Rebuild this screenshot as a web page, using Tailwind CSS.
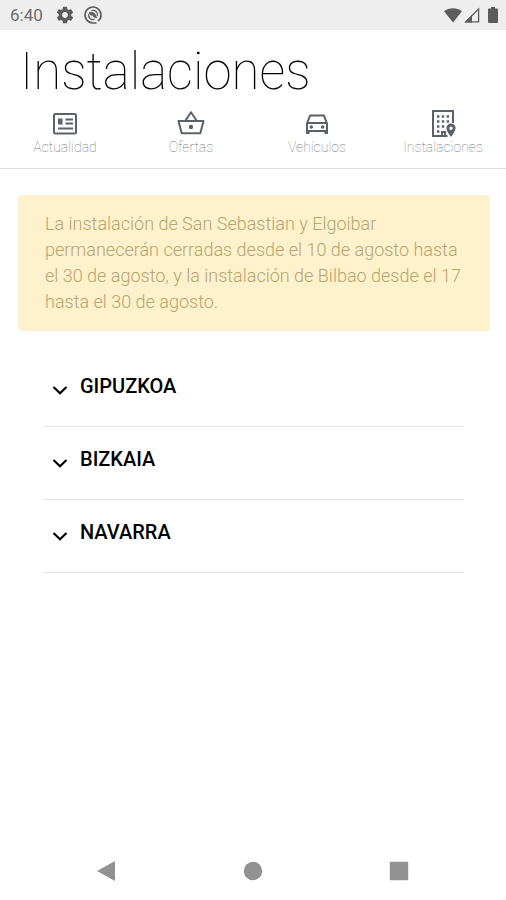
<!DOCTYPE html>
<html lang="es">
<head>
    <meta charset="UTF-8">
    <meta name="viewport" content="width=device-width, initial-scale=1.0">
    <title>Instalaciones</title>
    <script src="https://cdn.jsdelivr.net/npm/@tailwindcss/browser@4"></script>
</head>
<body class="flex min-h-screen flex-col bg-white font-[Roboto,sans-serif] text-black">
    <!-- Status bar -->
    <div class="flex h-[30px] items-center bg-[#eeeeee] px-2 text-[#5c5c5c]">
        <span class="pl-[2px] text-[17px] leading-5 text-[#6c6c6c]">6:40</span>
        <svg class="ml-3 size-5" viewBox="0 0 24 24" fill="currentColor" aria-hidden="true">
            <path d="M19.43 12.98c.04-.32.07-.64.07-.98s-.03-.66-.07-.98l2.11-1.65c.19-.15.24-.42.12-.64l-2-3.46c-.12-.22-.39-.3-.61-.22l-2.49 1c-.52-.4-1.08-.73-1.69-.98l-.38-2.65C14.46 2.18 14.25 2 14 2h-4c-.25 0-.46.18-.49.42l-.38 2.65c-.61.25-1.17.59-1.69.98l-2.49-1c-.23-.09-.49 0-.61.22l-2 3.46c-.13.22-.07.49.12.64l2.11 1.65c-.04.32-.07.65-.07.98s.03.66.07.98l-2.11 1.65c-.19.15-.24.42-.12.64l2 3.46c.12.22.39.3.61.22l2.49-1c.52.4 1.08.73 1.69.98l.38 2.65c.03.24.24.42.49.42h4c.25 0 .46-.18.49-.42l.38-2.65c.61-.25 1.17-.59 1.69-.98l2.49 1c.23.09.49 0 .61-.22l2-3.46c.12-.22.07-.49-.12-.64l-2.11-1.65zM12 15.5c-1.93 0-3.5-1.57-3.5-3.5s1.57-3.5 3.5-3.5 3.5 1.57 3.5 3.5-1.57 3.5-3.5 3.5z"/>
        </svg>
        <svg class="ml-2 size-5" viewBox="0 0 20 20" fill="none" stroke="currentColor" aria-hidden="true">
            <path d="M15.2 16.1A8 8 0 1 0 10 18h3.500" stroke-width="1.6"/>
            <path d="M5.700 9a4.500 4.500 0 0 0 6 5.200M8.500 5.700a4.500 4.500 0 0 1 5.900 5.300" stroke-width="1.3"/>
            <path d="M5.800 7.400c3.200-1.900 6.700.3 8.400 5.600-2.600.2-4-.7-4.700-2.500-1.900.1-3.200-1-3.700-3.100z" fill="currentColor" stroke="none"/>
        </svg>
        <div class="ml-auto flex items-center gap-[2px]">
            <svg class="h-4 w-[18px]" viewBox="0 0 18 16" fill="currentColor" aria-hidden="true">
                <path d="M0 4.3C5 .1 13 .1 18 4.300L9 15.5z"/>
            </svg>
            <svg class="size-4" viewBox="0 0 16 16" fill="none" stroke="currentColor" aria-hidden="true">
                <path d="M1.800 14.800L14.600 2v12.800z" stroke-width="1.3"/>
                <path d="M.5 15.500L8 8v7.500z" fill="currentColor" stroke="none"/>
            </svg>
            <svg class="ml-[6px] h-4 w-[10px]" viewBox="0 0 10 16" fill="currentColor" aria-hidden="true">
                <path d="M3 0h4v1.600h2q1 0 1 1V15q0 1-1 1H1q-1 0-1-1V2.600q0-1 1-1h2z"/>
            </svg>
        </div>
    </div>

    <header class="border-b border-[#dcdcdc]">
        <h1 class="px-5 pt-3 text-[51px] leading-[60px] font-thin">Instalaciones</h1>
        <!-- Section tabs -->
        <nav class="grid grid-cols-4 pt-2 pb-3 pl-[2px] text-[14px] leading-[18px] font-thin text-[#777777]">
            <a href="#actualidad" class="flex flex-col items-center">
                <svg class="size-7" viewBox="0 0 28 28" fill="none" stroke="#5b6168" stroke-width="2" aria-hidden="true">
                    <rect x="3" y="4" width="22" height="19.5" rx="1.5"/>
                    <path d="M14.5 9.500H22M14.5 13.500H22M7 18.500h15"/>
                    <path d="M7 8.500h4.500v6H7z" fill="#5b6168" stroke="none"/>
                </svg>
                Actualidad
            </a>
            <a href="#ofertas" class="flex flex-col items-center">
                <svg class="size-7" viewBox="0 0 28 28" fill="none" stroke="#5b6168" stroke-width="2" stroke-linejoin="round" aria-hidden="true">
                    <path d="M1.500 11h25l-3.200 12.200H4.700zM8.500 10.500L14 2.200l5.500 8.300"/>
                    <circle cx="14" cy="17" r="2.2" fill="#5b6168" stroke="none"/>
                </svg>
                Ofertas
            </a>
            <a href="#vehiculos" class="flex flex-col items-center">
                <svg class="size-7" viewBox="0 0 28 28" fill="none" stroke="#5b6168" stroke-width="2" stroke-linejoin="round" aria-hidden="true">
                    <path d="M4 13.500L7 5.600h14l3 7.900v7.500H4zM4 13h20"/>
                    <path d="M3 20h3.500v4H3zM21.500 20H25v4h-3.500z" fill="#5b6168" stroke="none"/>
                    <circle cx="8.300" cy="17" r="1.8" fill="#5b6168" stroke="none"/>
                    <circle cx="19.700" cy="17" r="1.8" fill="#5b6168" stroke="none"/>
                </svg>
                Vehículos
            </a>
            <a href="#instalaciones" class="flex flex-col items-center">
                <svg class="size-7" viewBox="0 0 28 28" fill="none" stroke="#5b6168" stroke-width="2" aria-hidden="true">
                    <path d="M24 13V1H4v25h14.500M13 26v-4h3v4"/>
                    <path d="M8 6.500h12M8 11.500h12M8 16.500h8M8 21.500h3" stroke-width="2.4" stroke-dasharray="2.4 2.4"/>
                    <path d="M22 13.500a4.600 4.600 0 0 0-4.600 4.600c0 3.400 4.600 8.900 4.600 8.900s4.600-5.500 4.600-8.900a4.600 4.600 0 0 0-4.600-4.600zm0 3a1.700 1.700 0 1 1 0 3.400 1.700 1.700 0 0 1 0-3.400z" fill="#5b6168" stroke="none"/>
                </svg>
                Instalaciones
            </a>
        </nav>
    </header>

    <main class="grow">
        <p class="mx-4 mt-[26px] ml-[18px] rounded bg-[#fff1cb] py-4 pr-6 pl-[27px] text-[18px] leading-[26px] font-light text-[#b5a573]">
            La instalación de San Sebastian y Elgoibar permanecerán cerradas desde el 10 de agosto hasta el 30 de agosto, y la instalación de Bilbao desde el 17 hasta el 30 de agosto.
        </p>

        <!-- Provinces -->
        <div class="mr-[42px] ml-11 mt-[23px] text-[20px] leading-6 font-medium">
            <button type="button" aria-expanded="false" class="flex h-[73px] w-full items-center gap-3 border-b border-[#e4e4e4] pl-2 pb-2">
                <svg class="mt-2 h-4 w-4" viewBox="0 0 16 16" fill="none" stroke="currentColor" stroke-width="2.2" aria-hidden="true"><path d="M1.500 5L8 11.200 14.500 5"/></svg>
                GIPUZKOA
            </button>
            <button type="button" aria-expanded="false" class="flex h-[73px] w-full items-center gap-3 border-b border-[#e4e4e4] pl-2 pb-2">
                <svg class="mt-2 h-4 w-4" viewBox="0 0 16 16" fill="none" stroke="currentColor" stroke-width="2.2" aria-hidden="true"><path d="M1.500 5L8 11.200 14.500 5"/></svg>
                BIZKAIA
            </button>
            <button type="button" aria-expanded="false" class="flex h-[73px] w-full items-center gap-3 border-b border-[#e4e4e4] pl-2 pb-2">
                <svg class="mt-2 h-4 w-4" viewBox="0 0 16 16" fill="none" stroke="currentColor" stroke-width="2.2" aria-hidden="true"><path d="M1.500 5L8 11.200 14.500 5"/></svg>
                NAVARRA
            </button>
        </div>
    </main>

    <!-- System navigation -->
    <footer class="grid h-[58px] grid-cols-3 px-[34px] text-[#929292]">
        <button type="button" aria-label="Atrás" class="flex items-center justify-center">
            <svg class="size-5" viewBox="0 0 20 20" fill="currentColor"><path d="M0 10L18 0v20z"/></svg>
        </button>
        <button type="button" aria-label="Inicio" class="flex items-center justify-center">
            <svg class="size-5" viewBox="0 0 20 20" fill="currentColor"><circle cx="10" cy="10" r="9.2"/></svg>
        </button>
        <button type="button" aria-label="Recientes" class="flex items-center justify-center">
            <svg class="size-5" viewBox="0 0 20 20" fill="currentColor"><rect x=".8" y=".8" width="18.4" height="18.4" rx=".8"/></svg>
        </button>
    </footer>
</body>
</html>
